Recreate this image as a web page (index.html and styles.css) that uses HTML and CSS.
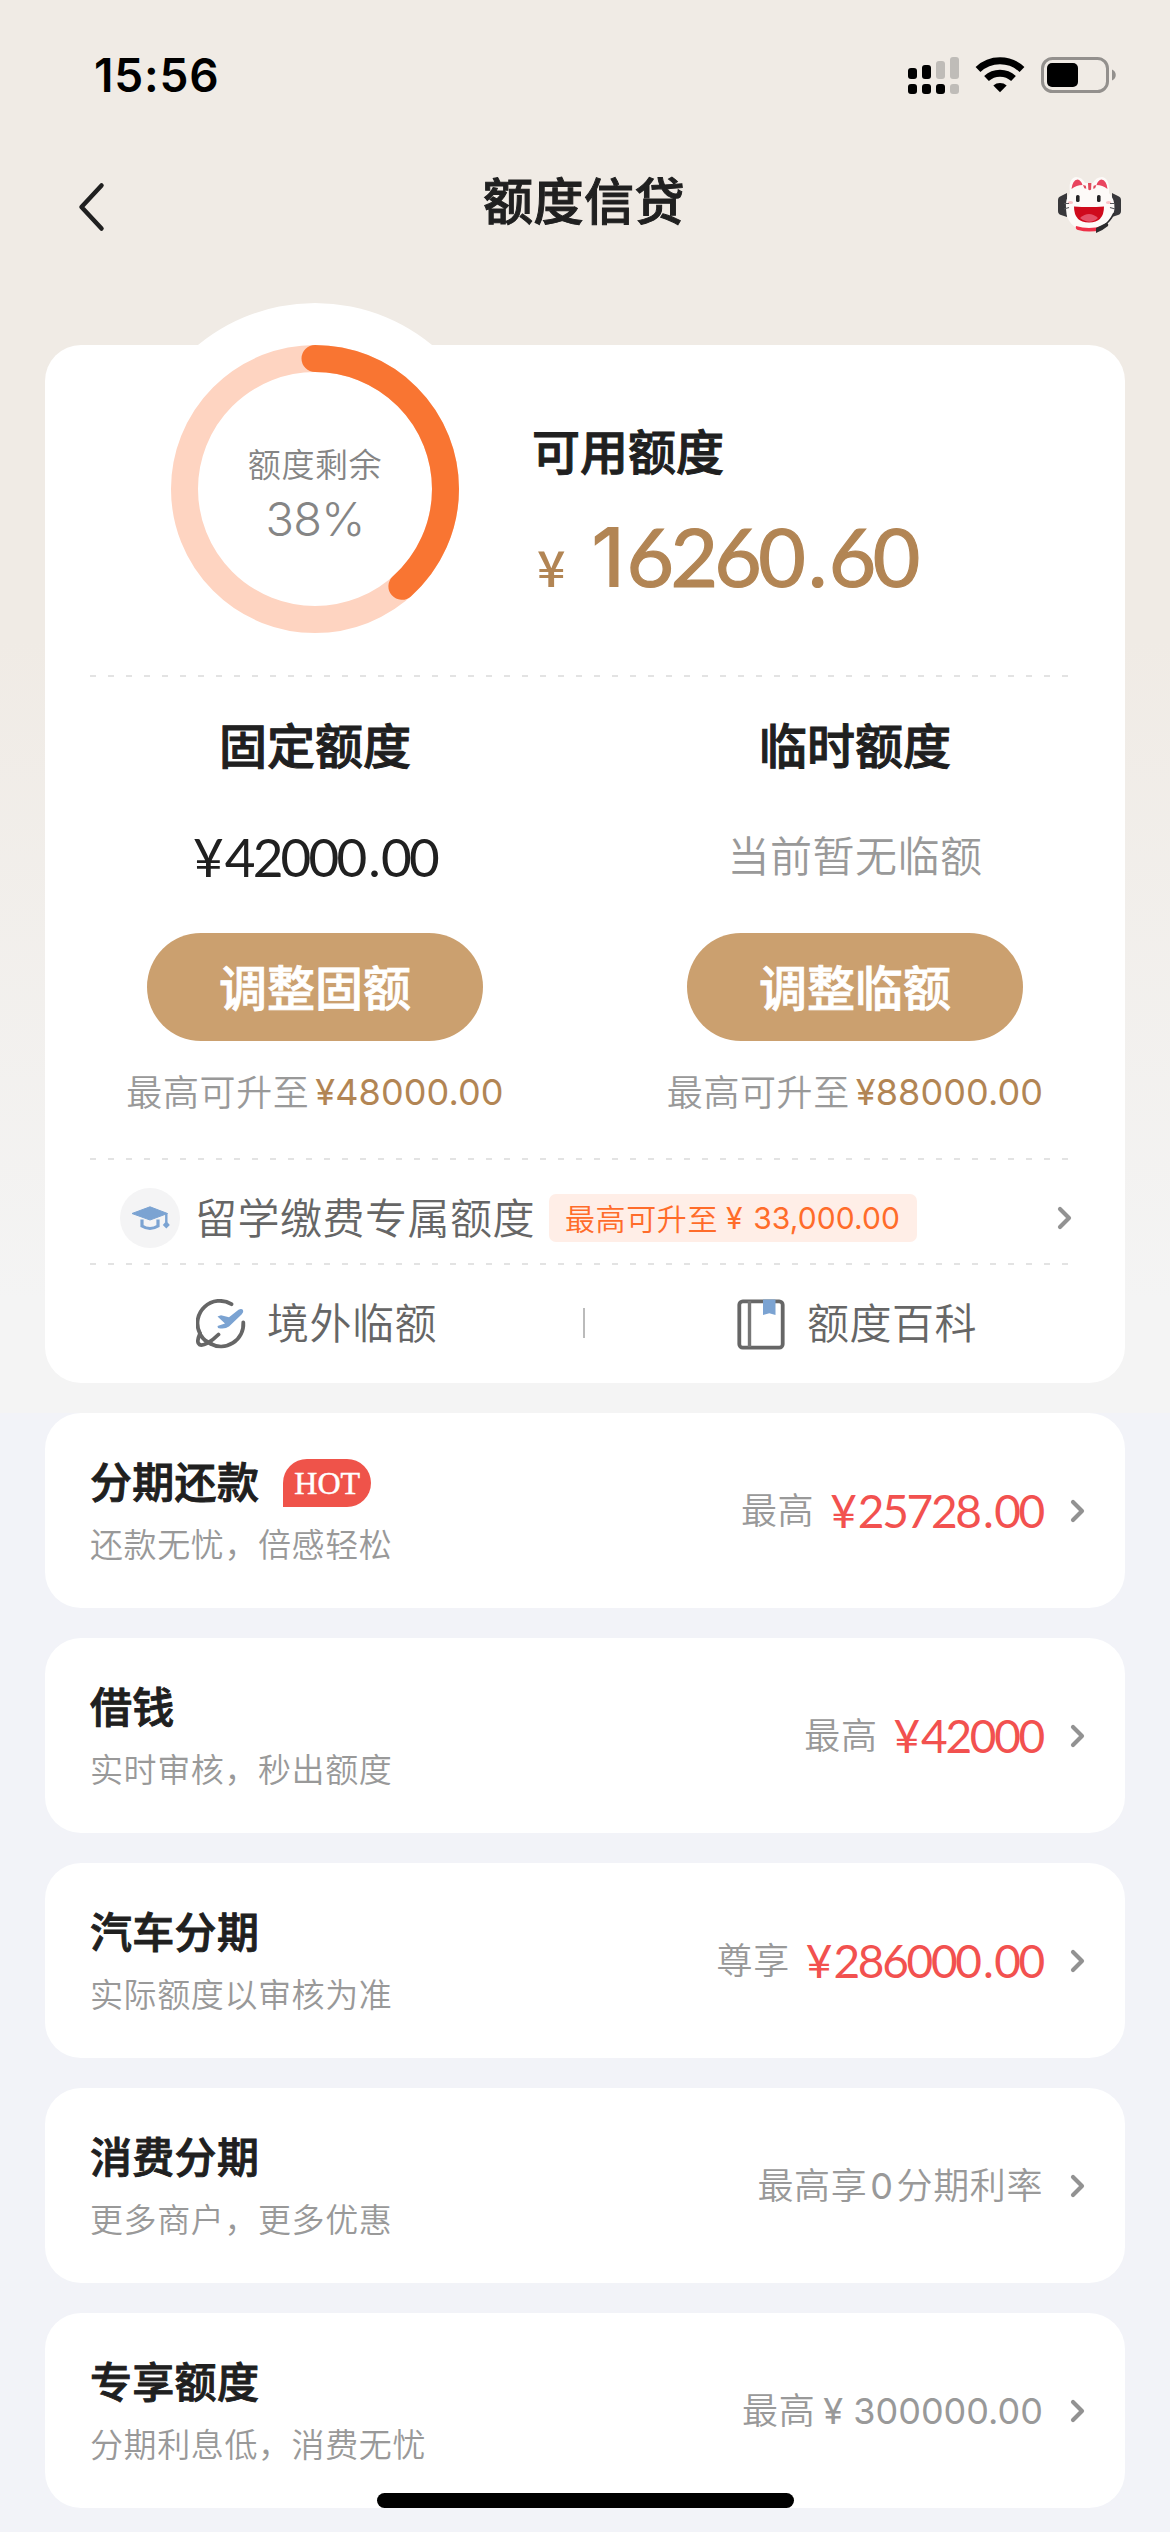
FILE: index.html
```html
<!DOCTYPE html>
<html lang="zh-CN">
<head>
<meta charset="utf-8">
<meta name="viewport" content="width=1170">
<title>额度信贷</title>
<link rel="stylesheet" href="styles.css">
</head>
<body>
<div class="page">
  <header class="status">
    <span class="clock">15:56</span>
    <svg class="status-icons" viewBox="0 0 210 40" width="210" height="40">
      <g fill="#000">
        <rect x="1" y="13" width="9" height="11" rx="3"/><rect x="15" y="10" width="9" height="14" rx="3"/>
        <rect x="1" y="29" width="9" height="10" rx="3"/><rect x="15" y="29" width="9" height="10" rx="3"/><rect x="29" y="29" width="9" height="10" rx="3"/>
      </g>
      <g fill="#bfbcb8">
        <rect x="29" y="6" width="9" height="18" rx="3"/><rect x="43" y="2" width="9" height="22" rx="3"/><rect x="43" y="29" width="9" height="10" rx="3"/>
      </g>
      <g fill="none" stroke="#000" stroke-width="7">
        <path d="M71 14.500a32 32 0 0 1 44 0"/>
        <path d="M79.500 23.500a20 20 0 0 1 27 0"/>
      </g>
      <path d="M86.300 30.500a10.500 10.500 0 0 1 13.400 0L93 37.200z" fill="#000"/>
      <rect x="135.500" y="3.500" width="65" height="33" rx="10" fill="none" stroke="#93908d" stroke-width="3"/>
      <rect x="140" y="8" width="31" height="24" rx="5"/>
      <path d="M205 14.500c5 2 5 9 0 11z" fill="#93908d"/>
    </svg>
  </header>

  <nav class="nav">
    <svg class="back" viewBox="0 0 30 52" width="30" height="52"><path d="M25.500 4.500 5.500 26l20 21.500" fill="none" stroke="#202020" stroke-width="4.500" stroke-linecap="round" stroke-linejoin="round"/></svg>
    <h1 class="nav-title">额度信贷</h1>
    <svg class="mascot" viewBox="0 0 64 60" width="64" height="60">
      <path d="M0 25q0-3 3-4l6-3v24l-6-2q-3-1-3-4zM63 25q0-3-3-4l-6-3v24l6-2q3-1 3-4z" fill="#38383b"/>
      <path d="M12 18Q10 3 18 2 24 2 27 8H35Q38 2 44 2 52 3 51 18 57 24 56.500 34 55 46 46 53 32 59 18 53 8 46 8 34 7 24 12 18Z" fill="#fdfaf8"/>
      <path d="M13.500 14q1-9 6-9.500 3.500.5 5 5.500-6 0-11 4zM49.500 14q-1-9-6-9.500-3.500.5-5 5.500 6 0 11 4z" fill="#e9455f"/>
      <path d="M30 8h3.400l-.3 6.500q-1.400 1.500-2.800 0zM25 10l2.800.8.500 3-2-.5zM38.400 10l-2.800.8-.5 3 2-.5z" fill="#e04a5c"/>
      <path d="M18 51q13 4 26 0l-1 4q-12 3-23 0-3-1-2-4z" fill="#ef3048"/>
      <path d="M16 31.500q15 1 30 0 0 16-15 16t-15-16z" fill="#cf0a1c"/>
      <path d="M22 43q9-8 18 0-8 7.500-18 0z" fill="#e45167"/>
      <rect x="18" y="20" width="3.600" height="7" rx="1.600" fill="#262527"/><rect x="39" y="20" width="3.600" height="7" rx="1.600" fill="#262527"/>
      <ellipse cx="12.500" cy="27.500" rx="2.600" ry="1.600" fill="#fbc3c6"/><ellipse cx="50.500" cy="27.500" rx="2.600" ry="1.600" fill="#fbc3c6"/>
      <path d="M6 28.500h5M6 34l5-1.500M57 28.500h-5M57 34l-5-1.500" stroke="#55565a" stroke-width="1.200"/>
      <path d="M56 38q-4 9-12 14" fill="none" stroke="#2c2c2e" stroke-width="1.800"/>
      <path d="M38 53l10-5q3 0 2 3-6 5-12 7z" fill="#2c2c2e"/>
    </svg>
  </nav>

  <main class="content">
    <section class="card quota">
      <div class="hero">
        <div class="gauge">
          <svg viewBox="0 0 368 368" width="368" height="368">
            <circle cx="184" cy="184" r="184" fill="#fff"/>
            <circle cx="184" cy="186" r="130.500" fill="none" stroke="#fed4c1" stroke-width="27"/>
            <circle cx="184" cy="186" r="130.500" fill="none" stroke="#f97532" stroke-width="27" stroke-linecap="round" pathLength="100" stroke-dasharray="38.4 100" transform="rotate(-90 184 186)"/>
          </svg>
          <div class="gauge-text"><span class="gauge-label">额度剩余</span><span class="gauge-value">38%</span></div>
        </div>
        <div class="available">
          <h2 class="heading">可用额度</h2>
          <p class="balance"><span class="balance-sign">¥</span><span class="balance-num"><span class="one">1</span>6260<span class="dot">.</span>60</span></p>
        </div>
      </div>
      <svg class="dash" viewBox="0 0 978 2" width="978" height="2"><path d="M0 1H978"/></svg>
      <div class="limits">
        <div class="limit">
          <h2 class="heading">固定额度</h2>
          <p class="limit-value money">¥<span class="digits">42000<span class="dot">.</span>00</span></p>
          <button class="btn">调整固额</button>
          <p class="limit-note">最高可升至<span class="gold">¥48000.00</span></p>
        </div>
        <div class="limit">
          <h2 class="heading">临时额度</h2>
          <p class="limit-value none">当前暂无临额</p>
          <button class="btn">调整临额</button>
          <p class="limit-note">最高可升至<span class="gold">¥88000.00</span></p>
        </div>
      </div>
      <svg class="dash" viewBox="0 0 978 2" width="978" height="2"><path d="M0 1H978"/></svg>
      <div class="study">
        <svg viewBox="0 0 60 60" width="60" height="60">
          <circle cx="30" cy="30" r="30" fill="#f4f4f5"/>
          <path d="M12 25.500 30 18.800 47.500 25.500 30 32z" fill="#7ba3d2" stroke="#7ba3d2" stroke-width="1" stroke-linejoin="round"/>
          <path d="M22 31.500v6.500q8 5 16 0v-6.500" fill="none" stroke="#7ba3d2" stroke-width="3.200"/>
          <path d="M46.300 25.500v9" stroke="#7ba3d2" stroke-width="2.400"/><path d="M46.300 33l3.500 4-3.500 3.500-3.500-3.500z" fill="#7ba3d2"/>
        </svg>
        <span class="study-name">留学缴费专属额度</span>
        <span class="tag">最高可升至<span class="tag-num">¥ 33,000.00</span></span>
        <svg class="arrow" viewBox="0 0 15 24" width="15" height="24"><path d="M3 3l9 9-9 9"/></svg>
      </div>
      <svg class="dash" viewBox="0 0 978 2" width="978" height="2"><path d="M0 1H978"/></svg>
      <div class="links">
        <a class="link">
          <svg viewBox="0 0 50 50" width="50" height="50">
            <g fill="none" stroke="#666" stroke-width="3.800" stroke-linecap="round" stroke-linejoin="round">
              <path d="M35.500 5.200A22.300 22.300 0 0 0 4 34.500"/><path d="M47.300 23.500A22.400 22.400 0 0 1 14 44.500"/>
              <path d="M4 34.500C1.500 40 1 44 3.500 45.500 7 47.500 15 43 22.500 35.500M5 36.500q3 5.500 10 8"/>
            </g>
            <path d="M21.500 17.500l3.500-1.300 8 2 9.500-7.500q3-1.500 4.500.2 1 2-1.200 4.300L33 27.500q-4 3-11 1.500l-.5-2 7.500-2.500z" fill="#7ba3d2"/>
          </svg>
          <span>境外临额</span>
        </a>
        <a class="link">
          <svg viewBox="0 0 50 52" width="50" height="52">
            <rect x="3.300" y="3.300" width="43.400" height="46.400" rx="3.500" fill="none" stroke="#666" stroke-width="3.800"/>
            <path d="M13.500 3v46" stroke="#777" stroke-width="3.400"/><path d="M27 1.500h12.500V17l-6.200-1.800L27 17z" fill="#7ba3d2"/>
          </svg>
          <span>额度百科</span>
        </a>
      </div>
    </section>

    <section class="card row">
      <div class="row-main"><h3>分期还款<span class="hot">HOT</span></h3><p>还款无忧，倍感轻松</p></div>
      <div class="row-side"><span class="side-text">最高</span><span class="price money">¥<span class="digits">25728<span class="dot">.</span>00</span></span><svg class="arrow" viewBox="0 0 15 24" width="15" height="24"><path d="M3 3l9 9-9 9"/></svg></div>
    </section>
    <section class="card row">
      <div class="row-main"><h3>借钱</h3><p>实时审核，秒出额度</p></div>
      <div class="row-side"><span class="side-text">最高</span><span class="price money">¥<span class="digits">42000</span></span><svg class="arrow" viewBox="0 0 15 24" width="15" height="24"><path d="M3 3l9 9-9 9"/></svg></div>
    </section>
    <section class="card row">
      <div class="row-main"><h3>汽车分期</h3><p>实际额度以审核为准</p></div>
      <div class="row-side"><span class="side-text">尊享</span><span class="price money">¥<span class="digits">286000<span class="dot">.</span>00</span></span><svg class="arrow" viewBox="0 0 15 24" width="15" height="24"><path d="M3 3l9 9-9 9"/></svg></div>
    </section>
    <section class="card row">
      <div class="row-main"><h3>消费分期</h3><p>更多商户，更多优惠</p></div>
      <div class="row-side"><span class="side-text">最高享<span class="zero">0</span>分期利率</span><svg class="arrow" viewBox="0 0 15 24" width="15" height="24"><path d="M3 3l9 9-9 9"/></svg></div>
    </section>
    <section class="card row">
      <div class="row-main"><h3>专享额度</h3><p>分期利息低，消费无忧</p></div>
      <div class="row-side"><span class="side-text">最高<span class="plain-num">¥ 300000.00</span></span><svg class="arrow" viewBox="0 0 15 24" width="15" height="24"><path d="M3 3l9 9-9 9"/></svg></div>
    </section>
  </main>
  <div class="home-bar"></div>
</div>
</body>
</html>
```
FILE: styles.css
```css
* { box-sizing: border-box; margin: 0; padding: 0; }

body {
  background: #f2f3f8;
  font-family: "Noto Sans CJK SC", "Noto Sans", sans-serif;
  font-weight: 350;
  color: #202020;
}

svg { display: block; flex: none; }

.page {
  position: relative;
  width: 1170px;
  height: 2532px;
  overflow: hidden;
  background: linear-gradient(#f0ebe5 0, #f0ebe5 640px, #f4f4f4 1300px, #f4f4f4 1413px, #f2f3f8 1413px);
}

.status {
  display: flex;
  justify-content: space-between;
  align-items: center;
  height: 150px;
  padding: 0 53px 0 94px;
}
.clock { font: 600 46px/50px Inter, sans-serif; color: #000; letter-spacing: .8px; margin-top: -1px; }

.nav {
  display: flex;
  justify-content: space-between;
  align-items: center;
  height: 102px;
  margin-bottom: 93px;
  padding: 0 48px 0 76px;
}
.back { margin-top: 12px; margin-right: 4px; }
.nav-title {
  font-size: 50px;
  line-height: 60px;
  font-weight: 500;
  letter-spacing: .5px;
  margin-top: -6px;
  -webkit-text-stroke: 1px #202020;
}
.mascot { margin-top: 8px; }

.content {
  display: flex;
  flex-direction: column;
  gap: 30px;
  padding: 0 45px;
}
.card { background: #fff; border-radius: 36px; }

.quota { height: 1038px; }
.hero { display: flex; height: 330px; padding-left: 86px; }
.gauge { position: relative; width: 368px; height: 368px; margin-top: -42px; }
.gauge-text {
  position: absolute;
  inset: 136px 0 auto;
  display: flex;
  flex-direction: column;
  align-items: center;
  color: #858585;
}
.gauge-label { font-size: 33px; line-height: 48px; letter-spacing: .6px; }
.gauge-value { font-family: Inter, sans-serif; font-size: 47px; line-height: 58px; margin-top: 3px; letter-spacing: -.8px; }
.available { padding: 74px 0 0 33px; }
.heading {
  font-size: 48px;
  line-height: 60px;
  font-weight: 500;
  -webkit-text-stroke: 1px #202020;
}
.balance { display: flex; align-items: baseline; color: #b28554; margin-top: 26px; line-height: 100px; }
.balance-sign { font-size: 50px; width: 59px; padding-left: 5px; font-weight: 500; line-height: 60px; }
.balance-num {
  font-family: Lato, sans-serif;
  font-weight: 400;
  font-size: 82px;
  letter-spacing: -3.600px;
  -webkit-text-stroke: 1.200px #b28554;
}
.balance-num .one { font-family: Inter, sans-serif; font-weight: 500; -webkit-text-stroke: 0; margin-right: 5px; }
.dot { margin: 0 .06em 0 .07em; }
.digits { margin-left: .07em; }

.dash { margin-left: 45px; }
.dash path { fill: none; stroke: #e3e3e3; stroke-width: 2; stroke-dasharray: 6 12; }

.limits { display: grid; grid-template-columns: 1fr 1fr; height: 481px; }
.limit { display: flex; flex-direction: column; align-items: center; padding-top: 36px; }
.limit-value { height: 60px; margin: 54px 0 46px; line-height: 60px; }
.money { font-family: Lato, "Noto Sans CJK SC", sans-serif; font-weight: 400; }
.limit-value.money { font-size: 53px; letter-spacing: -2.800px; line-height: 59px; }
.limit-value.none { font-size: 42px; line-height: 53px; letter-spacing: .5px; color: #999; }
.btn {
  width: 336px;
  height: 108px;
  padding-bottom: 3px;
  border: 0;
  border-radius: 54px;
  background: #cba06f;
  color: #fff;
  font: 500 48px/105px "Noto Sans CJK SC", sans-serif;
  -webkit-text-stroke: .800px #fff;
}
.limit-note { display: flex; font-size: 36px; line-height: 48px; margin-top: 25px; letter-spacing: .6px; color: #999; }
.gold { font-family: Inter, sans-serif; font-weight: 400; color: #b28554; margin-left: 6px; letter-spacing: .1px; line-height: 52px; }

.study { display: flex; align-items: center; height: 103px; padding: 13px 53px 0 75px; }
.study-name { margin: -4px 0 0 15px; font-size: 42px; line-height: 60px; letter-spacing: .5px; color: #666; }
.tag {
  display: flex;
  height: 48px;
  margin-left: 14px;
  padding: 0 17px 0 16px;
  border-radius: 7px;
  background: #ffeee7;
  color: #ff6c2a;
  font-size: 30px;
  line-height: 46px;
  letter-spacing: .6px;
}
.tag-num { font-family: Inter, sans-serif; font-weight: 400; margin-left: 8px; letter-spacing: .1px; word-spacing: 2px; line-height: 48px; }
.arrow { margin-left: auto; }
.arrow path { fill: none; stroke: #929292; stroke-width: 4.200; stroke-linecap: round; stroke-linejoin: round; }

.links { display: grid; grid-template-columns: 1fr 1fr; height: 117px; }
.link { display: flex; justify-content: center; align-items: center; gap: 21px; padding-left: 3px; font-size: 42px; line-height: 60px; letter-spacing: .5px; color: #666; }
.link span { margin-top: -6px; }
.link:first-child { background: linear-gradient(#bbb, #bbb) right 43px / 2px 30px no-repeat; }

.row { display: flex; justify-content: space-between; height: 195px; padding: 0 45px; }
.row-main { padding-top: 37px; }
.row-main h3 {
  display: flex;
  align-items: center;
  font-size: 42px;
  line-height: 60px;
  height: 60px;
  font-weight: 500;
  letter-spacing: .3px;
  -webkit-text-stroke: .900px #202020;
}
.row-main p { font-size: 33px; line-height: 48px; margin-top: 9px; letter-spacing: .6px; color: #999; }
.hot {
  width: 88px;
  height: 48px;
  margin-left: 24px;
  margin-top: 5px;
  border-radius: 24px 24px 24px 0;
  background: #ef534a;
  color: #fff;
  font: 400 32px/48px "Liberation Serif", serif;
  letter-spacing: 0;
  text-align: center;
  -webkit-text-stroke: .500px #fff;
}
.row-side { display: flex; align-items: center; font-size: 36px; color: #999; letter-spacing: .6px; }
.row-side .arrow { margin: 0 -5px 0 27px; }
.side-text { margin-top: -5px; }
.price { color: #f2514f; font-size: 46px; letter-spacing: -2.300px; margin-left: 16px; }
.zero { margin: 0 3px; font-family: Inter, sans-serif; font-weight: 400; }
.plain-num { font-family: Inter, sans-serif; font-weight: 400; margin-left: 8px; letter-spacing: 0; }

.home-bar {
  position: absolute;
  left: 377px;
  bottom: 24px;
  width: 417px;
  height: 15px;
  border-radius: 8px;
  background: #000;
}
```
